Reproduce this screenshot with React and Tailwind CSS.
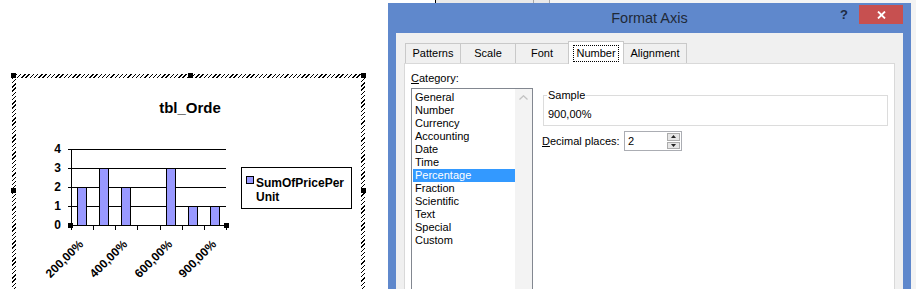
import React from 'react';

const font = { fontFamily: '"Liberation Sans", Arial, sans-serif' };

const categories = [
  'General', 'Number', 'Currency', 'Accounting', 'Date', 'Time',
  'Percentage', 'Fraction', 'Scientific', 'Text', 'Special', 'Custom',
];

const tabs = [
  { label: 'Patterns', width: 'w-[56px]' },
  { label: 'Scale', width: 'w-[56px]' },
  { label: 'Font', width: 'w-[54px]' },
  { label: 'Number', width: 'w-[56px]', active: true },
  { label: 'Alignment', width: 'w-[64px]' },
];

const bars = [2, 3, 2, 0, 3, 1, 1];
const xLabels = [
  { i: 0, text: '200,00%' },
  { i: 2, text: '400,00%' },
  { i: 4, text: '600,00%' },
  { i: 6, text: '900,00%' },
];

const Handle = ({ className }) => (
  <div className={`absolute w-[5px] h-[5px] bg-black ${className}`} />
);

const Chart = () => {
  const x0 = 71;
  const x1 = 226;
  const base = 226;
  const unit = 19;
  const step = (x1 - x0) / 7;

  return (
    <div className="relative w-[353px] h-[232px] p-[4px] bg-[repeating-linear-gradient(135deg,#000_0px,#000_1px,#fff_1px,#fff_3px)]">
      <Handle className="-left-px -top-px bg-[#777]" />
      <Handle className="left-[176px] -top-px" />
      <Handle className="-right-px -top-px" />
      <Handle className="-left-px top-[114px]" />
      <Handle className="-right-px top-[114px]" />

      <div className="w-full h-full bg-white">
        <svg width="345" height="224" className="block">
          <g transform="translate(-16 -79)" fontFamily='"Liberation Sans", Arial, sans-serif' fontWeight="bold">
            <text x="190" y="114" fontSize="15" textAnchor="middle">tbl_Orde</text>

            {[4, 3, 2, 1, 0].map((v) => (
              <g key={v}>
                <text x="61" y={base - v * unit + 4} fontSize="12" textAnchor="end">{v}</text>
                {v > 0 && (
                  <line x1="68" x2={x1} y1={base - v * unit + 0.5} y2={base - v * unit + 0.5} stroke="#000" />
                )}
              </g>
            ))}

            {bars.map((v, i) =>
              v > 0 ? (
                <rect
                  key={i}
                  x={Math.round(x0 + i * step + 6) + 0.5}
                  y={base - v * unit + 0.5}
                  width="9"
                  height={v * unit}
                  fill="#9999ff"
                  stroke="#000"
                />
              ) : null
            )}

            <line x1={x0 + 0.5} x2={x0 + 0.5} y1="150" y2={base + 1} stroke="#000" />
            <line x1={x0} x2={x1} y1={base + 0.5} y2={base + 0.5} stroke="#000" />
            {Array.from({ length: 8 }, (_, i) => (
              <line
                key={i}
                x1={Math.round(x0 + i * step) + 0.5}
                x2={Math.round(x0 + i * step) + 0.5}
                y1={base}
                y2={base + 5}
                stroke="#000"
              />
            ))}
            <rect x="68" y="224" width="5" height="5" fill="#000" />
            <rect x="224" y="224" width="5" height="5" fill="#000" />

            {xLabels.map(({ i, text }) => {
              const ax = Math.round(x0 + (i + 0.5) * step) + 2;
              const ay = 246;
              return (
                <text
                  key={text}
                  x={ax}
                  y={ay}
                  fontSize="12"
                  textAnchor="end"
                  transform={`rotate(-45 ${ax} ${ay})`}
                >
                  {text}
                </text>
              );
            })}

            <rect x="241.5" y="168.5" width="110" height="41" fill="#fff" stroke="#000" />
            <rect x="246.5" y="177.5" width="7" height="7" fill="#9999ff" stroke="#000" />
            <text x="256" y="188" fontSize="12">SumOfPricePer</text>
            <text x="256" y="202" fontSize="12">Unit</text>
          </g>
        </svg>
      </div>
    </div>
  );
};

const SpinArrow = ({ up }) => (
  <div className="flex-1 border border-[#acacac] bg-[#e6e6e6] flex items-center justify-center">
    <svg width="5" height="3" viewBox="0 0 5 3">
      <path d={up ? 'M0 3 L2.5 0 L5 3 Z' : 'M0 0 L2.5 3 L5 0 Z'} fill="#222" />
    </svg>
  </div>
);

const Dialog = () => (
  <div className="w-[523px] shrink-0 flex flex-col min-h-0">
    <div className="h-[3px] shrink-0 flex">
      <div className="w-[47px] bg-white" />
      <div className="w-px bg-black" />
      <div className="w-[97px] bg-[#e9e9e9]" />
      <div className="w-px bg-[#a8a8a8]" />
      <div className="w-[15px] bg-[#e9e9e9]" />
      <div className="w-px bg-[#a8a8a8]" />
      <div className="flex-1 bg-[#f4f4f4]" />
    </div>

    <div className="flex-1 min-h-0 bg-[#5f88cc] px-[8px] flex flex-col">
      <div className="h-[30px] shrink-0 grid grid-cols-[1fr_auto_1fr]">
        <div />
        <div className="pt-[6px] text-[14.5px] leading-[18px] text-[#1f2a38]">Format Axis</div>
        <div className="flex justify-end items-start pt-[2px]">
          <span className="mt-[3px] mr-[11px] text-[13px] font-bold leading-[14px] text-[#1d2c44]">?</span>
          <div className="w-[44px] h-[19px] bg-[#c75050] flex items-center justify-center">
            <svg width="9" height="8" viewBox="0 0 9 8">
              <path d="M1 0.5 L8 7.5 M8 0.5 L1 7.5" stroke="#fff" strokeWidth="1.8" />
            </svg>
          </div>
        </div>
      </div>

      <div className="flex-1 min-h-0 overflow-hidden bg-[#f0f0f0] pt-[8px] px-[8px] flex flex-col text-[11px] leading-[13px] text-black">
        <div className="flex shrink-0 items-end h-[22px] pl-px">
          {tabs.map((t, i) => (
            <div
              key={t.label}
              className={`${t.width} ${i > 0 ? '-ml-px' : ''} border border-b-0 border-[#c9c9c9] flex items-center justify-center ${
                t.active ? 'relative z-10 h-[23px] -mb-px bg-white' : 'h-[20px] bg-[#f0f0f0]'
              }`}
            >
              {t.active ? (
                <span className="border border-dotted border-black px-[2px] py-px">{t.label}</span>
              ) : (
                t.label
              )}
            </div>
          ))}
        </div>

        <div className="flex-1 shrink-0 h-[240px] bg-white border border-[#d9d9d9] flex pt-[8px] pl-[6px]">
          <div className="w-[122px] flex flex-col">
            <div>
              <span className="underline">C</span>ategory:
            </div>
            <div className="mt-[3px] h-[210px] shrink-0 border border-[#828790] flex">
              <div className="flex-1 pl-px pt-[2px]">
                {categories.map((c) => (
                  <div
                    key={c}
                    className={`h-[13px] pl-[2px] ${c === 'Percentage' ? 'bg-[#3399ff] text-white' : ''}`}
                  >
                    {c}
                  </div>
                ))}
              </div>
              <div className="w-[17px] bg-[#f3f3f3] flex justify-center pt-[6px]">
                <svg width="9" height="5" viewBox="0 0 9 5">
                  <path d="M0.5 4.5 L4.5 0.8 L8.5 4.5" fill="none" stroke="#c2c2c2" strokeWidth="1.3" />
                </svg>
              </div>
            </div>
          </div>

          <div className="ml-[10px] flex flex-col">
            <div className="relative mt-[23px] w-[345px] h-[31px] border border-[#dcdcdc] pt-[12px] pl-[4px]">
              <span className="absolute left-[3px] -top-[7px] px-px bg-white">Sample</span>
              900,00%
            </div>
            <div className="mt-[5px] flex items-center h-[20px] -ml-px">
              <div className="w-[82px]">
                <span className="underline">D</span>ecimal places:
              </div>
              <div className="w-[58px] h-[20px] border border-[#abadb3] flex bg-white">
                <div className="flex-1 pl-[3px] flex items-center">2</div>
                <div className="w-[14px] flex flex-col gap-px py-px pr-px">
                  <SpinArrow up />
                  <SpinArrow />
                </div>
              </div>
            </div>
          </div>
        </div>
      </div>
    </div>
  </div>
);

const App = () => (
  <div className="w-[916px] h-[289px] flex bg-white overflow-hidden" style={font}>
    <div className="w-[388px] shrink-0 pt-[74px] pl-[12px]">
      <Chart />
    </div>
    <Dialog />
    <div className="flex-1 bg-[#f3f3f3]" />
  </div>
);

export default App;
